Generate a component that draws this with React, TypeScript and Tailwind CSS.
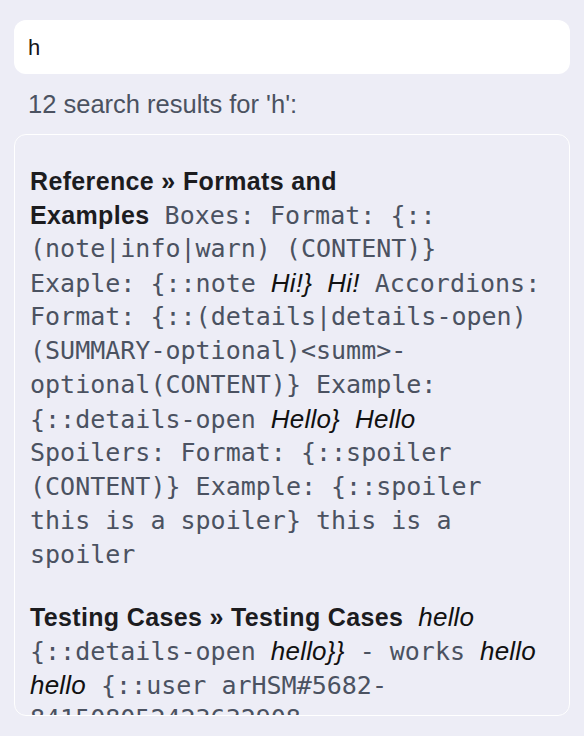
import React from "react";

const sans = "font-['Liberation_Sans',Arial,sans-serif]";
const mono = "font-['DejaVu_Sans_Mono',monospace]";

function Title({ children }: { children: React.ReactNode }) {
  return (
    <span className={`${sans} font-bold text-[25px] tracking-[0.35px] text-[#1c1c1f]`}>
      {children}
    </span>
  );
}

function Code({ children }: { children: React.ReactNode }) {
  return <span className="text-[#4b5261]">{children}</span>;
}

function Em({ children }: { children: React.ReactNode }) {
  return <em className={`${sans} italic text-[26px] tracking-[0.2px] text-[#111]`}>{children}</em>;
}

// each line kept explicit so the wrapping matches the screenshot
const Line = ({ children }: { children: React.ReactNode }) => (
  <div className={`${mono} text-[25px] whitespace-pre leading-[34px] h-[34px] text-[#4b5261]`}>
    {children}
  </div>
);

export default function App() {
  return (
    <div className="min-h-screen bg-[#ededf6] px-[14px] pt-5">
      {/* search box */}
      <div className="flex h-[54px] items-center rounded-xl bg-white px-[14px]">
        <span className={`${sans} text-[22px] text-[#16161a]`}>h</span>
      </div>

      <p className={`${sans} px-[14px] py-[14px] text-[25.5px] leading-8 text-[#4b5261]`}>
        12 search results for 'h':
      </p>

      {/* results */}
      <div className="h-[582px] overflow-hidden rounded-xl border border-white px-[15px] pt-px">
        <div className="pt-7">
          <Line>
            <Title>Reference » Formats and</Title>
          </Line>
          <Line>
            <Title>Examples</Title> <Code>Boxes: Format: {"{::"}</Code>
          </Line>
          <Line>
            <Code>(note|info|warn) (CONTENT){"}"}</Code>
          </Line>
          <Line>
            <Code>Exaple: {"{::note"}</Code> <Em>Hi!{"}"}</Em> <Em>Hi!</Em> <Code>Accordions:</Code>
          </Line>
          <Line>
            <Code>Format: {"{::(details|details-open)"}</Code>
          </Line>
          <Line>
            <Code>(SUMMARY-optional)&lt;summ&gt;-</Code>
          </Line>
          <Line>
            <Code>optional(CONTENT){"}"} Example:</Code>
          </Line>
          <Line>
            <Code>{"{::details-open"}</Code> <Em>Hello{"}"}</Em> <Em>Hello</Em>
          </Line>
          <Line>
            <Code>Spoilers: Format: {"{::spoiler"}</Code>
          </Line>
          <Line>
            <Code>(CONTENT){"}"} Example: {"{::spoiler"}</Code>
          </Line>
          <Line>
            <Code>this is a spoiler{"}"} this is a</Code>
          </Line>
          <Line>
            <Code>spoiler</Code>
          </Line>
        </div>

        <div className="pt-7">
          <Line>
            <Title>Testing Cases » Testing Cases</Title> <Em>hello</Em>
          </Line>
          <Line>
            <Code>{"{::details-open"}</Code> <Em>hello{"}}"}</Em> <Code>- works</Code> <Em>hello</Em>
          </Line>
          <Line>
            <Em>hello</Em> <Code>{"{::user arHSM#5682-"}</Code>
          </Line>
          <Line>
            <Code>841508052423632908</Code>
          </Line>
        </div>
      </div>
    </div>
  );
}
